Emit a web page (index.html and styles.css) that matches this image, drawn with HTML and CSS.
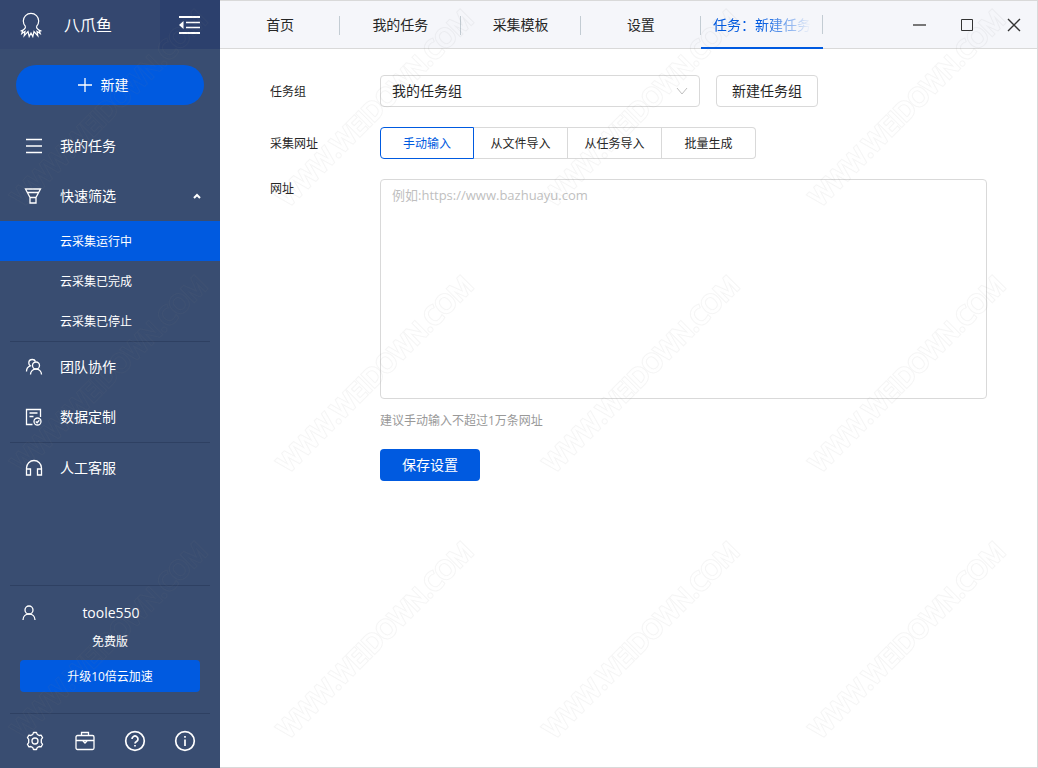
FILE: index.html
```html
<!DOCTYPE html>
<html lang="zh-CN">
<head>
<meta charset="utf-8">
<meta name="viewport" content="width=device-width, initial-scale=1">
<title>八爪鱼</title>
<link rel="stylesheet" href="styles.css">
</head>
<body>
<div class="app">
  <aside class="sidebar">
    <header class="brand">
      <div class="brand-main">
        <svg class="logo" width="24" height="26" viewBox="0 0 24 26"><path d="M6.500 14.500C4.800 12.800 4.300 11 4.300 9a7.700 7.700 0 0 1 15.400 0c0 2-.5 3.800-2.200 5.500M6.500 14.500c0 2-1.500 3.500-5 4.500M17.500 14.500c0 2 1.500 3.500 5 4.500M1.500 19h2.200L2.800 21.500 6 19.500l-.8 4.300L9 19.500l1.200 5L12 21l1.800 3.500 1.200-5 3.800 4.300-.8-4.300 3.200 2-.9-2.500h2.200"/></svg>
        <h1 class="brand-name">八爪鱼</h1>
      </div>
      <button class="collapse" type="button" aria-label="收起菜单">
        <svg width="22" height="20" viewBox="0 0 22 20"><path d="M0 2h21M0 18h21"/><path class="thin" d="M7 7.500h14M7 12.500h14"/><path class="solid" d="M4.500 6v8L0 10z"/></svg>
      </button>
    </header>

    <button class="create" type="button">
      <svg class="icon" width="14" height="14" viewBox="0 0 14 14"><path d="M7 0v14M0 7h14"/></svg>
      <span>新建</span>
    </button>

    <nav class="menu">
      <a class="menu-item" href="#">
        <svg class="icon" width="20" height="20" viewBox="0 0 20 20"><path d="M2 3.500h16M2 10h16M2 16.500h16"/></svg>
        <span>我的任务</span>
      </a>
      <button class="menu-item" type="button" aria-expanded="true">
        <svg class="icon" width="20" height="20" viewBox="0 0 20 20"><path d="M1.500 3h15L12 11.500v5.500H6v-5.500zM3.500 6.500h11M6 11.500h6"/></svg>
        <span>快速筛选</span>
        <svg class="caret" width="8" height="6" viewBox="0 0 8 6"><path d="M1 5l3-3 3 3"/></svg>
      </button>
      <div class="submenu">
        <a class="submenu-item active" href="#">云采集运行中</a>
        <a class="submenu-item" href="#">云采集已完成</a>
        <a class="submenu-item" href="#">云采集已停止</a>
      </div>
      <hr class="rule">
      <a class="menu-item" href="#">
        <svg class="icon" width="20" height="20" viewBox="0 0 20 20"><circle cx="12" cy="8.500" r="3.500"/><path d="M6.500 17.500c0-3 2.300-5.500 5.500-5.500s5.500 2.500 5.500 5.500M11.500 4.500C11 3 9.700 2.500 8.300 2.500c-2 0-3.500 1.500-3.500 3.500 0 1.200.5 2.200 1.500 2.900-2.300.8-3.800 2.900-3.800 5.600"/></svg>
        <span>团队协作</span>
      </a>
      <a class="menu-item" href="#">
        <svg class="icon" width="20" height="20" viewBox="0 0 20 20"><path d="M8.500 17.500h-6v-15h14V10M5.500 6h8M5.500 9.500h4"/><circle cx="13.500" cy="14.500" r="3.500"/><path d="m11.800 14.500 1.300 1.300 2.200-2.500"/></svg>
        <span>数据定制</span>
      </a>
      <hr class="rule">
      <a class="menu-item" href="#">
        <svg class="icon" width="20" height="20" viewBox="0 0 20 20"><path d="M2.500 11.500V10a7.500 7.500 0 0 1 15 0v1.500M2.500 11h4v6h-4zM13.500 11h4v6h-4z"/></svg>
        <span>人工客服</span>
      </a>
    </nav>

    <section class="account">
      <hr class="rule">
      <div class="user">
        <svg class="icon" width="18" height="18" viewBox="0 0 18 18"><circle cx="9" cy="6" r="4"/><path d="M3 16c0-3.500 2.500-6 6-6s6 2.500 6 6"/></svg>
        <span class="user-name">toole550</span>
      </div>
      <p class="plan">免费版</p>
      <button class="upgrade" type="button">升级10倍云加速</button>
      <hr class="rule">
      <div class="tools">
        <button class="tool" type="button" aria-label="设置"><svg class="icon" width="20" height="20" viewBox="0 0 20 20"><path stroke-linejoin="round" d="m7.800 3.400.7-1.900h3l.7 1.900 1.900 1.100 2-.4 1.500 2.600-1.300 1.600v3.400l1.300 1.600-1.500 2.600-2-.4-1.900 1.100-.7 1.900h-3l-.7-1.900-1.900-1.100-2 .4-1.500-2.600 1.300-1.600V8.300L2.400 6.700l1.500-2.600 2 .4z"/><circle cx="10" cy="10" r="3"/></svg></button>
        <button class="tool" type="button" aria-label="工具箱"><svg class="icon" width="20" height="20" viewBox="0 0 20 20"><rect x="1" y="4.500" width="18" height="14" rx="1.500"/><path d="M6.500 4.500v-3h7v3M1 9.500h18M8 10l2 2 2-2"/></svg></button>
        <button class="tool" type="button" aria-label="帮助"><svg class="icon" width="22" height="22" viewBox="0 0 22 22"><circle class="ring" cx="11" cy="11" r="9.300"/><path class="ring" d="M8 9a3 3 0 1 1 4.500 2.600c-1 .6-1.500 1-1.500 2M11 15v1.500"/></svg></button>
        <button class="tool" type="button" aria-label="关于"><svg class="icon" width="22" height="22" viewBox="0 0 22 22"><circle class="ring" cx="11" cy="11" r="9.300"/><path class="ring" d="M11 9.500V16M11 6v1.700"/></svg></button>
      </div>
    </section>
  </aside>

  <div class="workspace">
    <header class="topbar">
      <nav class="tabs">
        <a class="tab" href="#"><span>首页</span></a>
        <a class="tab" href="#"><span>我的任务</span></a>
        <a class="tab" href="#"><span>采集模板</span></a>
        <a class="tab" href="#"><span>设置</span></a>
        <a class="tab current" href="#" aria-current="page"><span>任务：新建任务</span></a>
      </nav>
      <div class="window-controls">
        <button class="win" type="button" aria-label="最小化"><svg width="14" height="14" viewBox="0 0 14 14"><path class="faint" d="M0 7h13"/></svg></button>
        <button class="win" type="button" aria-label="最大化"><svg width="14" height="14" viewBox="0 0 14 14"><path d="M1.500 1.500h11v11h-11z"/></svg></button>
        <button class="win" type="button" aria-label="关闭"><svg class="close" width="14" height="14" viewBox="0 0 14 14"><path d="m1 1 12 12M13 1 1 13"/></svg></button>
      </div>
    </header>

    <main class="content">
      <form class="form">
        <label class="label" for="group">任务组</label>
        <div class="group-row">
          <div class="select-wrap">
            <select class="select" id="group"><option>我的任务组</option></select>
            <svg class="chevron" width="12" height="8" viewBox="0 0 12 8"><path d="m1 1 5 6 5-6"/></svg>
          </div>
          <button class="plain" type="button">新建任务组</button>
        </div>

        <span class="label" id="source-label">采集网址</span>
        <div class="segments" role="radiogroup" aria-labelledby="source-label">
          <label class="segment"><input class="segment-input" type="radio" name="source" checked><span>手动输入</span></label>
          <label class="segment"><input class="segment-input" type="radio" name="source"><span>从文件导入</span></label>
          <label class="segment"><input class="segment-input" type="radio" name="source"><span>从任务导入</span></label>
          <label class="segment"><input class="segment-input" type="radio" name="source"><span>批量生成</span></label>
        </div>

        <label class="label label-top" for="urls">网址</label>
        <div class="url-field">
          <textarea class="textarea" id="urls" placeholder="例如:https://www.bazhuayu.com"></textarea>
          <p class="hint">建议手动输入不超过1万条网址</p>
          <button class="save" type="submit">保存设置</button>
        </div>
      </form>
    </main>
  </div>
</div>

<svg class="watermark" aria-hidden="true">
  <defs>
    <text id="mark-text" class="mark-text" x="133" y="142" text-anchor="middle" transform="rotate(-45 133 133)">WWW.WEIDOWN.COM</text>
    <mask id="mark-outline" maskUnits="userSpaceOnUse" x="0" y="0" width="266" height="266">
      <use class="mark-outer" href="#mark-text"/>
      <use class="mark-inner" href="#mark-text"/>
    </mask>
    <pattern id="mark" width="266" height="266" patternUnits="userSpaceOnUse" patternTransform="translate(-24 -25)">
      <rect class="mark-ink" width="266" height="266" mask="url(#mark-outline)"/>
    </pattern>
  </defs>
  <rect width="100%" height="100%" fill="url(#mark)"/>
</svg>
</body>
</html>
```

FILE: styles.css
```css
* {
  box-sizing: border-box;
}

body {
  margin: 0;
  color: #262626;
  font: 14px/20px "Open Sans", "Noto Sans CJK SC", sans-serif;
}

button,
select,
textarea {
  margin: 0;
  padding: 0;
  border: 0;
  background: none;
  color: inherit;
  font: inherit;
}

button {
  cursor: pointer;
}

a {
  color: inherit;
  text-decoration: none;
}

svg {
  display: block;
  flex: none;
  fill: none;
  stroke: currentColor;
}

.app {
  display: flex;
  min-height: 100vh;
}

/* Sidebar */

.sidebar {
  display: flex;
  flex: 0 0 220px;
  flex-direction: column;
  background: #394d71;
  color: #fff;
}

.brand {
  display: flex;
  height: 49px;
  background: #34476f;
}

.brand-main {
  display: flex;
  flex: 1;
  align-items: center;
  gap: 21px;
  padding-left: 19px;
}

.logo {
  stroke-width: 1.2;
}

.brand-name {
  margin: 0;
  font-size: 16px;
  font-weight: 400;
}

.collapse {
  display: flex;
  align-items: center;
  justify-content: center;
  width: 60px;
  background: #2c406d;
  stroke-width: 2;
}

.thin {
  stroke-width: 1.4;
}

.solid {
  fill: currentColor;
  stroke: none;
}

.create {
  display: flex;
  align-items: center;
  justify-content: center;
  gap: 9px;
  height: 40px;
  margin: 16px;
  padding-right: 14px;
  border-radius: 20px;
  background: #005ae0;
}

.icon {
  stroke-width: 1.3;
}

.menu-item {
  display: flex;
  align-items: center;
  gap: 16px;
  width: 100%;
  height: 50px;
  padding: 0 19px 0 24px;
}

.caret {
  margin-left: auto;
  stroke-width: 2;
}

.submenu-item {
  display: block;
  height: 40px;
  padding-left: 60px;
  font-size: 12px;
  line-height: 42px;
}

.submenu-item.active {
  background: #005ae0;
}

.rule {
  height: 1px;
  margin: 0 10px;
  border: 0;
  background: #2e4062;
}

.account {
  margin-top: auto;
}

.user {
  display: grid;
  grid-template-columns: 18px 1fr 16px;
  align-items: center;
  margin-top: 17px;
  padding: 0 20px;
}

.user-name {
  text-align: center;
}

.plan {
  margin: 9px 0 8px;
  font-size: 12px;
  text-align: center;
}

.upgrade {
  display: block;
  width: 180px;
  height: 32px;
  margin: 0 auto 21px;
  padding-top: 2px;
  border-radius: 4px;
  background: #005ae0;
  font-size: 12px;
}

.tools {
  display: grid;
  grid-template-columns: repeat(4, 1fr);
  height: 54px;
  padding: 0 10px;
}

.tool {
  display: flex;
  align-items: center;
  justify-content: center;
}

.ring {
  stroke-width: 1.7;
}

/* Workspace */

.workspace {
  display: flex;
  flex: 1;
  flex-direction: column;
  min-width: 0;
  border: solid #d9d9d9;
  border-width: 1px 1px 1px 0;
}

.topbar {
  display: flex;
  justify-content: space-between;
  height: 48px;
  background: #f5f6fa;
  box-shadow: inset 0 -1px #d9d9d9;
}

.tabs {
  display: grid;
  flex: 0 1 603px;
  grid-template-columns: repeat(5, 1fr);
}

.tab {
  display: flex;
  align-items: center;
  justify-content: center;
  background: linear-gradient(#c3ccd3, #c3ccd3) right center / 1px 19px no-repeat;
  white-space: nowrap;
}

.tab.current {
  padding: 2px 12px 0;
  border-bottom: 2px solid #005ae0;
  color: #005ae0;
}

.current span {
  overflow: hidden;
  mask-image: linear-gradient(90deg, #000 50%, transparent);
}

.window-controls {
  display: flex;
  gap: 33px;
  padding-right: 16px;
}

.win {
  display: flex;
  align-items: center;
  color: #333;
}

.close {
  stroke-width: 1.4;
}

.faint {
  stroke: #777;
  stroke-width: 2;
}

.content {
  flex: 1;
  padding: 26px 50px;
}

.form {
  display: grid;
  grid-template-columns: 110px 1fr;
  row-gap: 20px;
}

.label {
  align-self: center;
  padding-top: 2px;
  font-size: 12px;
}

.label-top {
  align-self: start;
  padding-top: 0;
}

.group-row {
  display: flex;
  gap: 16px;
}

.select-wrap {
  display: grid;
  flex: 0 1 320px;
  align-items: center;
}

.select {
  grid-area: 1 / 1;
  height: 32px;
  padding: 0 32px 0 11px;
  border: 1px solid #d9d9d9;
  border-radius: 4px;
  appearance: none;
}

.chevron {
  grid-area: 1 / 1;
  justify-self: end;
  margin-right: 12px;
  color: #bfbfbf;
  pointer-events: none;
}

.plain {
  width: 102px;
  height: 32px;
  border: 1px solid #d9d9d9;
  border-radius: 4px;
}

.segments {
  display: flex;
  font-size: 12px;
}

.segment {
  display: flex;
  align-items: center;
  justify-content: center;
  width: 94px;
  height: 32px;
  padding-top: 2px;
  border: solid #d9d9d9;
  border-width: 1px 1px 1px 0;
  cursor: pointer;
}

.segment:first-child {
  border-left-width: 1px;
  border-radius: 4px 0 0 4px;
}

.segment:last-child {
  border-radius: 0 4px 4px 0;
}

.segment:has(:checked) {
  border-color: #005ae0;
  color: #005ae0;
}

.segment-input {
  position: absolute;
  opacity: 0;
  pointer-events: none;
}

.textarea {
  display: block;
  width: 100%;
  height: 220px;
  padding: 5px 11px;
  border: 1px solid #d9d9d9;
  border-radius: 4px;
  font-size: 13px;
  resize: none;
}

.textarea::placeholder {
  color: #bfbfbf;
}

.hint {
  margin: 12px 0 18px;
  color: #999;
  font-size: 12px;
}

.save {
  width: 100px;
  height: 32px;
  border-radius: 4px;
  background: #005ae0;
  color: #fff;
}

/* Watermark over the whole window */

.watermark {
  position: fixed;
  inset: 0;
  width: 100%;
  height: 100%;
  stroke: none;
  pointer-events: none;
}

.mark-text {
  font: 25px "Open Sans", sans-serif;
}

.mark-outer {
  fill: #fff;
  stroke: #fff;
  stroke-width: 3;
}

.mark-inner {
  fill: #000;
  stroke: #000;
  stroke-width: 1;
}

.mark-ink {
  fill: #808080;
  fill-opacity: 0.08;
}
```
